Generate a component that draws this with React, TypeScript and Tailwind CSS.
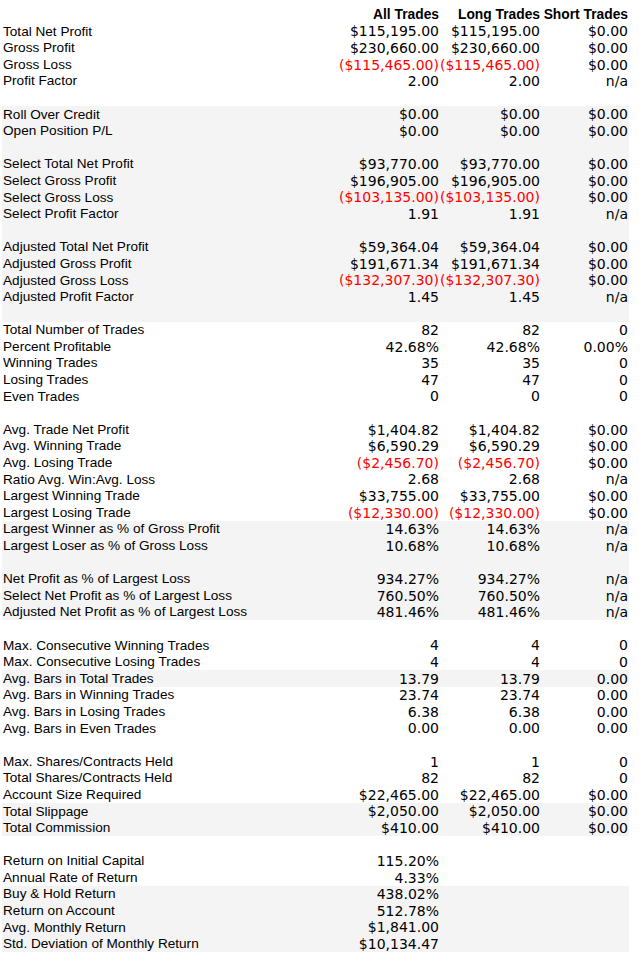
import React from "react";

type Row = { l?: string; a?: string; b?: string; c?: string; g?: boolean; blank?: boolean };

const R = (l: string, a = "", b = "", c = "", g = false): Row => ({ l, a, b, c, g });
const B = (g = false): Row => ({ blank: true, g });

const rows: Row[] = [
  R("Total Net Profit", "$115,195.00", "$115,195.00", "$0.00"),
  R("Gross Profit", "$230,660.00", "$230,660.00", "$0.00"),
  R("Gross Loss", "($115,465.00)", "($115,465.00)", "$0.00"),
  R("Profit Factor", "2.00", "2.00", "n/a"),
  B(),
  R("Roll Over Credit", "$0.00", "$0.00", "$0.00", true),
  R("Open Position P/L", "$0.00", "$0.00", "$0.00", true),
  B(true),
  R("Select Total Net Profit", "$93,770.00", "$93,770.00", "$0.00", true),
  R("Select Gross Profit", "$196,905.00", "$196,905.00", "$0.00", true),
  R("Select Gross Loss", "($103,135.00)", "($103,135.00)", "$0.00", true),
  R("Select Profit Factor", "1.91", "1.91", "n/a", true),
  B(true),
  R("Adjusted Total Net Profit", "$59,364.04", "$59,364.04", "$0.00", true),
  R("Adjusted Gross Profit", "$191,671.34", "$191,671.34", "$0.00", true),
  R("Adjusted Gross Loss", "($132,307.30)", "($132,307.30)", "$0.00", true),
  R("Adjusted Profit Factor", "1.45", "1.45", "n/a", true),
  B(true),
  R("Total Number of Trades", "82", "82", "0"),
  R("Percent Profitable", "42.68%", "42.68%", "0.00%"),
  R("Winning Trades", "35", "35", "0"),
  R("Losing Trades", "47", "47", "0"),
  R("Even Trades", "0", "0", "0"),
  B(),
  R("Avg. Trade Net Profit", "$1,404.82", "$1,404.82", "$0.00"),
  R("Avg. Winning Trade", "$6,590.29", "$6,590.29", "$0.00"),
  R("Avg. Losing Trade", "($2,456.70)", "($2,456.70)", "$0.00"),
  R("Ratio Avg. Win:Avg. Loss", "2.68", "2.68", "n/a"),
  R("Largest Winning Trade", "$33,755.00", "$33,755.00", "$0.00"),
  R("Largest Losing Trade", "($12,330.00)", "($12,330.00)", "$0.00"),
  R("Largest Winner as % of Gross Profit", "14.63%", "14.63%", "n/a", true),
  R("Largest Loser as % of Gross Loss", "10.68%", "10.68%", "n/a", true),
  B(true),
  R("Net Profit as % of Largest Loss", "934.27%", "934.27%", "n/a", true),
  R("Select Net Profit as % of Largest Loss", "760.50%", "760.50%", "n/a", true),
  R("Adjusted Net Profit as % of Largest Loss", "481.46%", "481.46%", "n/a", true),
  B(),
  R("Max. Consecutive Winning Trades", "4", "4", "0"),
  R("Max. Consecutive Losing Trades", "4", "4", "0"),
  R("Avg. Bars in Total Trades", "13.79", "13.79", "0.00", true),
  R("Avg. Bars in Winning Trades", "23.74", "23.74", "0.00"),
  R("Avg. Bars in Losing Trades", "6.38", "6.38", "0.00"),
  R("Avg. Bars in Even Trades", "0.00", "0.00", "0.00"),
  B(),
  R("Max. Shares/Contracts Held", "1", "1", "0"),
  R("Total Shares/Contracts Held", "82", "82", "0"),
  R("Account Size Required", "$22,465.00", "$22,465.00", "$0.00"),
  R("Total Slippage", "$2,050.00", "$2,050.00", "$0.00", true),
  R("Total Commission", "$410.00", "$410.00", "$0.00", true),
  B(),
  R("Return on Initial Capital", "115.20%"),
  R("Annual Rate of Return", "4.33%"),
  R("Buy & Hold Return", "438.02%", "", "", true),
  R("Return on Account", "512.78%", "", "", true),
  R("Avg. Monthly Return", "$1,841.00", "", "", true),
  R("Std. Deviation of Monthly Return", "$10,134.47", "", "", true),
];

const numFont = { fontFamily: '"DejaVu Sans", Verdana, sans-serif' };
const labelFont = { fontFamily: '"Liberation Sans", Arial, sans-serif' };

function Val({ v, w }: { v?: string; w: string }) {
  const red = v && v.startsWith("(");
  return (
    <div className={`${w} shrink-0 text-right whitespace-nowrap pr-[1px] ${red ? "text-[#ff0000]" : "text-black"}`}>
      {v}
    </div>
  );
}

export default function App() {
  return (
    <div className="w-[644px] h-[965px] bg-white pt-[6.5px] pl-[2px]">
      <div className="w-[627px]">
        <div className="flex h-[16.6px] items-center font-bold text-[13.8px] leading-none text-black" style={labelFont}>
          <div className="flex-1" />
          <div className="w-[120px] text-right pr-[1px] whitespace-nowrap">All Trades</div>
          <div className="w-[101px] text-right pr-[1px] whitespace-nowrap">Long Trades</div>
          <div className="w-[88px] text-right pr-[1px] whitespace-nowrap">Short Trades</div>
        </div>
        {rows.map((r, i) => (
          <div key={i} className={`flex h-[16.6px] items-center ${r.g ? "bg-[#f4f4f4]" : ""}`}>
            {r.blank ? null : (
              <>
                <div className="flex-1 pl-[1px] text-[13.6px] leading-none text-black whitespace-nowrap" style={labelFont}>
                  {r.l}
                </div>
                <div className="flex text-[14px] leading-none" style={numFont}>
                  <Val v={r.a} w="w-[120px]" />
                  <Val v={r.b} w="w-[101px]" />
                  <Val v={r.c} w="w-[88px]" />
                </div>
              </>
            )}
          </div>
        ))}
      </div>
    </div>
  );
}
